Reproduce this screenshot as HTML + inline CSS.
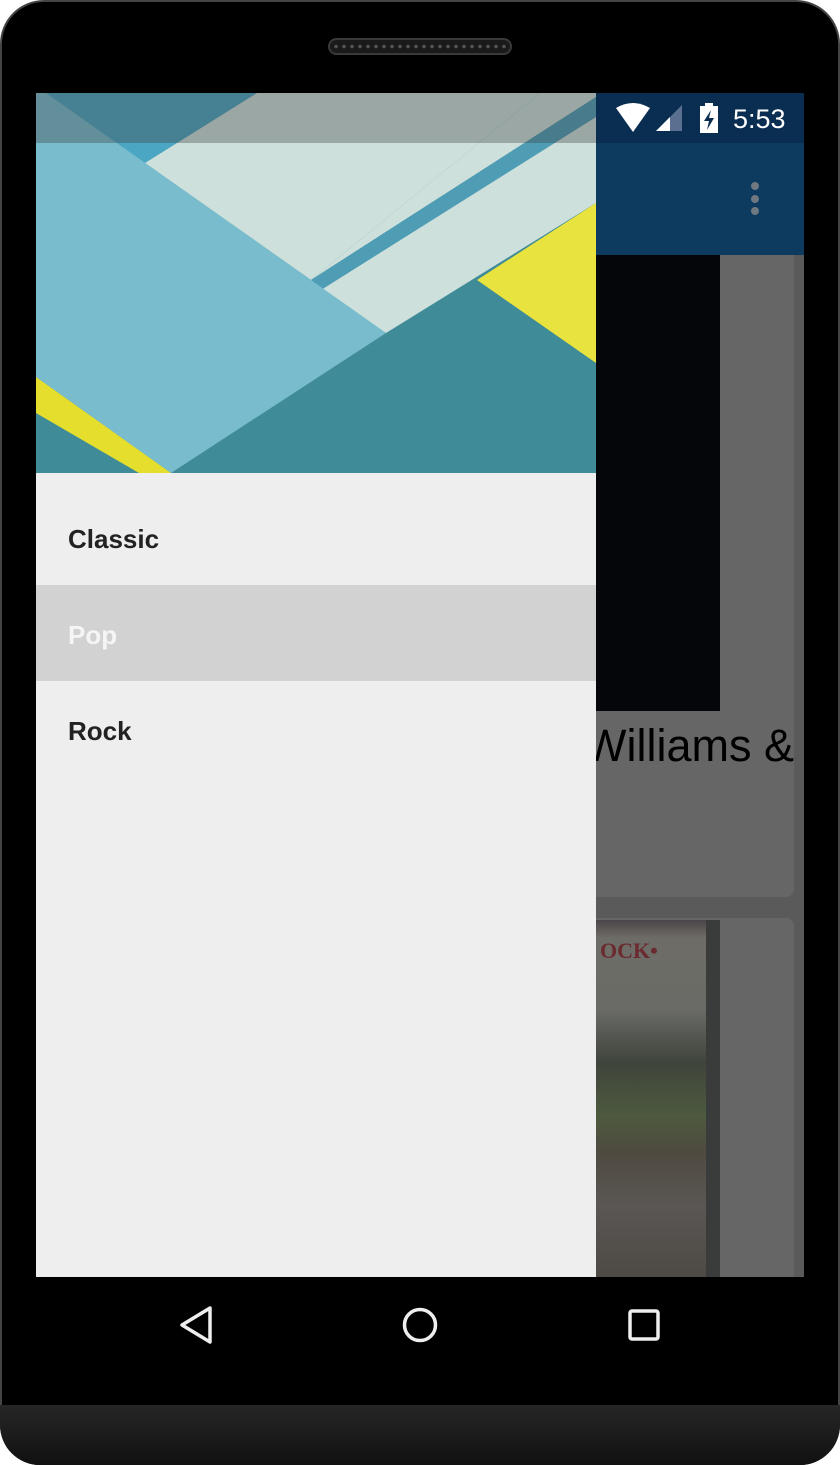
<!DOCTYPE html>
<html><head><style>
*{margin:0;padding:0;box-sizing:border-box}
body{width:840px;height:1465px;background:#fff;position:relative;overflow:hidden;font-family:"Liberation Sans",sans-serif}
.phone{position:absolute;left:0;top:0;width:840px;height:1465px;background:#000;border-radius:44px 44px 40px 40px;border:2px solid #444;border-bottom:none}
.chin{position:absolute;left:0;top:1405px;width:840px;height:60px;background:linear-gradient(#262626,#111);border-radius:0 0 40px 40px}
.grille{position:absolute;left:328px;top:38px;width:184px;height:17px;border-radius:9px;background:#1a1a1a;border:2px solid #3a3a3a;background-image:radial-gradient(circle,#555 1.5px,transparent 2px);background-size:8px 13px;background-position:2px 0}
.abs{position:absolute}
</style></head><body>
<div class="phone"></div>
<div class="chin"></div>
<div class="grille"></div>
<div class="abs" style="left:596px;top:93px;width:208px;height:50px;background:#0a2d52"></div>
<div class="abs" style="left:596px;top:143px;width:208px;height:112px;background:#0d3a5f"></div>
<div class="abs" style="left:751px;top:182px;width:8px;height:8px;border-radius:50%;background:#6f7880"></div>
<div class="abs" style="left:751px;top:195px;width:8px;height:8px;border-radius:50%;background:#6f7880"></div>
<div class="abs" style="left:751px;top:207px;width:8px;height:8px;border-radius:50%;background:#6f7880"></div>
<svg class="abs" style="left:612px;top:102px" width="80" height="32" viewBox="0 0 80 32">
<path d="M4 6 Q21 -4 38 6 L21 30 Z" fill="#fff"/>
<path d="M44 29 L70 3 L70 29 Z" fill="#5b7090"/>
<path d="M44 29 L58 15 L58 29 Z" fill="#fff"/>
</svg>
<svg class="abs" style="left:698px;top:102px" width="22" height="32" viewBox="0 0 22 32">
<rect x="7" y="1" width="8" height="4" fill="#fff"/><rect x="2" y="4" width="18" height="27" fill="#fff"/>
<path d="M13 8 L6 19 L11 19 L9 28 L16 16 L11 16 Z" fill="#0a2d52"/>
</svg>
<div class="abs" style="left:733px;top:104px;font-size:27px;color:#fff;line-height:30px">5:53</div>
<div class="abs" style="left:596px;top:255px;width:208px;height:1022px;background:#5a5a5a"></div>
<div class="abs" style="left:580px;top:255px;width:214px;height:642px;background:#666;border-radius:0 0 8px 8px"></div>
<div class="abs" style="left:596px;top:255px;width:124px;height:456px;background:#05060a"></div>
<div class="abs" style="left:540px;top:717px;width:254px;font-size:45px;color:#000;line-height:58px;text-align:right;white-space:nowrap;overflow:hidden">Williams &amp;</div>
<div class="abs" style="left:580px;top:918px;width:214px;height:359px;background:#666;border-radius:8px 8px 0 0"></div>
<div class="abs" style="left:596px;top:920px;width:124px;height:357px;background:linear-gradient(#4a4548 0%,#6e6c66 5%,#6a6b66 25%,#3f443c 40%,#4d5a3e 55%,#4f4a40 65%,#5a5754 80%,#4d4a45 100%)"></div>
<div class="abs" style="left:600px;top:938px;font:bold 22px 'Liberation Serif',serif;color:#6a2a30">OCK•</div>
<div class="abs" style="left:706px;top:920px;width:14px;height:357px;background:#3a3c3c"></div>
<div class="abs" style="left:36px;top:473px;width:560px;height:804px;background:#eeeeee"></div>
<svg class="abs" style="left:36px;top:93px" width="560" height="380" viewBox="36 93 560 380">
<rect x="36" y="93" width="560" height="380" fill="#3f8b98"/>
<polygon points="46,93 257,93 145,163" fill="#4aa6c2"/>
<polygon points="257,93 540,93 311,280 145,163" fill="#cde0dc"/>
<polygon points="540,93 596,93 596,97 311,280" fill="#cde0dc"/>
<polygon points="311,280 596,97 596,117 321,290" fill="#4f9db5"/>
<polygon points="321,290 596,117 596,203 386,333" fill="#cde0dc"/>
<polygon points="596,203 477,280 596,363" fill="#e8e33e"/>
<polygon points="36,93 46,93 386,333 171,473 36,377" fill="#78bccd"/>
<polygon points="36,377 171,473 139,473 36,413" fill="#e6de2c"/>
<rect x="36" y="93" width="560" height="50" fill="rgba(60,60,60,0.35)"/>
</svg>
<div class="abs" style="left:36px;top:585px;width:560px;height:96px;background:#d2d2d2"></div>
<div class="abs" style="left:68px;top:524px;font-size:26px;font-weight:bold;color:#222">Classic</div>
<div class="abs" style="left:68px;top:620px;font-size:26px;font-weight:bold;color:#f5f5f5">Pop</div>
<div class="abs" style="left:68px;top:716px;font-size:26px;font-weight:bold;color:#222">Rock</div>
<svg class="abs" style="left:0;top:1277px" width="840" height="128" viewBox="0 0 840 128">
<path d="M210 31 L182 48 L210 65 Z" fill="none" stroke="#eee" stroke-width="3.5" stroke-linejoin="round"/>
<circle cx="420" cy="48" r="15.5" fill="none" stroke="#eee" stroke-width="3.5"/>
<rect x="630" y="34" width="28" height="28" rx="2" fill="none" stroke="#eee" stroke-width="3.5"/>
</svg>
</body></html>
